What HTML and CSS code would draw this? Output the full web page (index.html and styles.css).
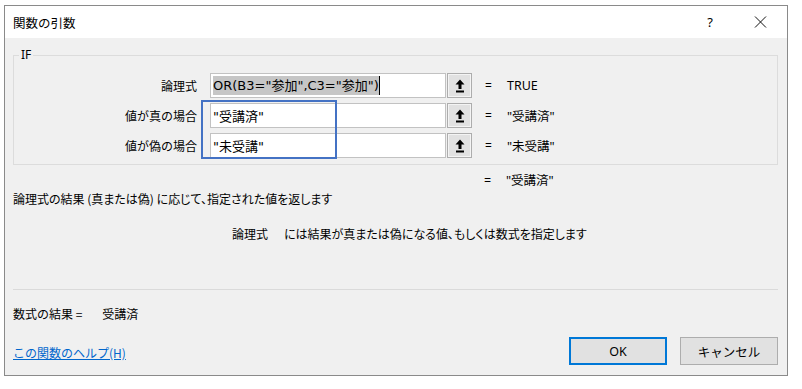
FILE: index.html
```html
<!DOCTYPE html>
<html lang="ja">
<head>
  <meta charset="UTF-8">
  <meta name="viewport" content="width=device-width, initial-scale=1">
  <title>関数の引数</title>
  <link rel="stylesheet" href="styles.css">
</head>
<body>

<div class="dialog">
  <div class="titlebar">
    <span class="title">関数の引数</span>
    <span class="help">?</span>
    <svg class="close" width="13" height="12" viewBox="0 0 13 12">
      <path d="M1 0.5 L12 11.5 M12 0.5 L1 11.5" stroke="#111" stroke-width="1" fill="none"/>
    </svg>
  </div>

  <div class="body">
    <fieldset class="group">
      <legend>IF</legend>
      <div class="rows">
        <div class="arg-row">
          <label class="arg-name">論理式</label>
          <div class="arg-input"><span class="sel">OR(B3="参加",C3="参加")</span><span class="caret"></span></div>
          <button class="ref-btn">
            <svg width="10" height="14" viewBox="0 0 10 14"><path d="M5 0.5 L9.5 5.5 L6.5 5.5 L6.5 10 L3.5 10 L3.5 5.5 L0.5 5.5 Z" fill="#000"/><rect x="1" y="11.5" width="8" height="2" fill="#000"/></svg>
          </button>
          <span class="eq">=</span>
          <span class="arg-val">TRUE</span>
        </div>
        <div class="arg-row">
          <label class="arg-name">値が真の場合</label>
          <div class="arg-input">"受講済"</div>
          <button class="ref-btn">
            <svg width="10" height="14" viewBox="0 0 10 14"><path d="M5 0.5 L9.5 5.5 L6.5 5.5 L6.5 10 L3.5 10 L3.5 5.5 L0.5 5.5 Z" fill="#000"/><rect x="1" y="11.5" width="8" height="2" fill="#000"/></svg>
          </button>
          <span class="eq">=</span>
          <span class="arg-val">"受講済"</span>
        </div>
        <div class="arg-row">
          <label class="arg-name">値が偽の場合</label>
          <div class="arg-input">"未受講"</div>
          <button class="ref-btn">
            <svg width="10" height="14" viewBox="0 0 10 14"><path d="M5 0.5 L9.5 5.5 L6.5 5.5 L6.5 10 L3.5 10 L3.5 5.5 L0.5 5.5 Z" fill="#000"/><rect x="1" y="11.5" width="8" height="2" fill="#000"/></svg>
          </button>
          <span class="eq">=</span>
          <span class="arg-val">"未受講"</span>
        </div>
        <div class="highlight"></div>
      </div>
    </fieldset>

    <div class="result-row"><span class="eq">=</span><span>"受講済"</span></div>
    <p class="func-desc">論理式の結果 (真または偽) に応じて、指定された値を返します</p>
    <p class="arg-desc"><span class="arg-desc-name">論理式</span><span>には結果が真または偽になる値、もしくは数式を指定します</span></p>

    <div class="separator"></div>

    <div class="formula-result">数式の結果 =<span class="formula-val">受講済</span></div>

    <div class="footer">
      <a class="help-link" href="#">この関数のヘルプ(H)</a>
      <div class="buttons">
        <button class="btn btn-ok">OK</button>
        <button class="btn">キャンセル</button>
      </div>
    </div>
  </div>
</div>

</body>
</html>
```

FILE: styles.css
```css
body { margin: 0; background: #fff; font-family: "Noto Sans", "Noto Sans CJK JP", sans-serif; font-size: 12px; color: #000; }
.dialog { width: 782px; margin: 5px 0 0 4px; border: 1px solid #8a8a8a; background: #f0f0f0; }

.titlebar { height: 32px; background: #fff; display: flex; align-items: center; padding-left: 8px; }
.title { font-family: "Noto Sans CJK JP", sans-serif; font-size: 12.5px; flex: 1; }
.help { font-size: 13px; margin-right: 41px; }
.close { margin-right: 20px; }

.body { padding: 0 9px 10px 8px; }

.group { margin: 10px 0 0 0; padding: 11px 0 6px 0; border: 1px solid #dcdcdc; }
.group legend { margin-left: 5px; padding: 0 2px; font-size: 12px; line-height: 14px; }

.rows { position: relative; display: flex; flex-direction: column; gap: 5px; }
.arg-row { display: flex; align-items: center; height: 25px; }
.arg-name { width: 183px; margin-right: 13px; text-align: right; font-family: "Noto Sans CJK JP", sans-serif; }
.arg-input { box-sizing: border-box; width: 236px; height: 25px; border: 1px solid #c2c2c2; background: #fff; display: flex; align-items: center; padding-left: 2px; font-family: "DejaVu Sans", "Noto Sans CJK JP", sans-serif; font-size: 13px; white-space: nowrap; }
.sel { background: #c6c6c6; line-height: 19px; }
.caret { width: 1px; height: 19px; background: #000; }
.ref-btn { box-sizing: border-box; width: 25px; height: 25px; margin-left: 1px; padding: 0; border: 1px solid #adadad; box-shadow: inset 0 0 0 1px #f4f4f4; background: #e1e1e1; display: flex; align-items: center; justify-content: center; }
.eq { width: 22px; margin-left: 13px; }
.arg-val { font-size: 12.5px; }
.highlight { position: absolute; left: 187px; top: 27px; width: 132px; height: 55px; border: 2px solid #4472c4; }

.result-row { display: flex; margin: 7px 0 0 458px; line-height: 18px; font-size: 12.5px; }
.func-desc { margin: 0; line-height: 17px; font-family: "Noto Sans CJK JP", sans-serif; font-feature-settings: "palt"; }
.arg-desc { margin: 18px 0 0 219px; line-height: 17px; font-family: "Noto Sans CJK JP", sans-serif; font-feature-settings: "palt"; }
.arg-desc-name { margin-right: 16px; }

.separator { height: 1px; background: #dadada; margin-top: 47px; }

.formula-result { margin-top: 15px; line-height: 17px; font-family: "Noto Sans CJK JP", sans-serif; }
.formula-val { margin-left: 20px; }

.footer { display: flex; justify-content: space-between; align-items: center; margin-top: 15px; }
.help-link { color: #0066cc; margin-top: 3px; font-family: "Noto Sans CJK JP", sans-serif; }
.buttons { display: flex; gap: 13px; }
.btn { box-sizing: border-box; width: 98px; height: 28px; border: 1px solid #adadad; background: #e1e1e1; font-family: "Noto Sans", "Noto Sans CJK JP", sans-serif; font-size: 12.5px; color: #000; padding: 0; }
.btn-ok { border: 2px solid #0078d7; }
```
